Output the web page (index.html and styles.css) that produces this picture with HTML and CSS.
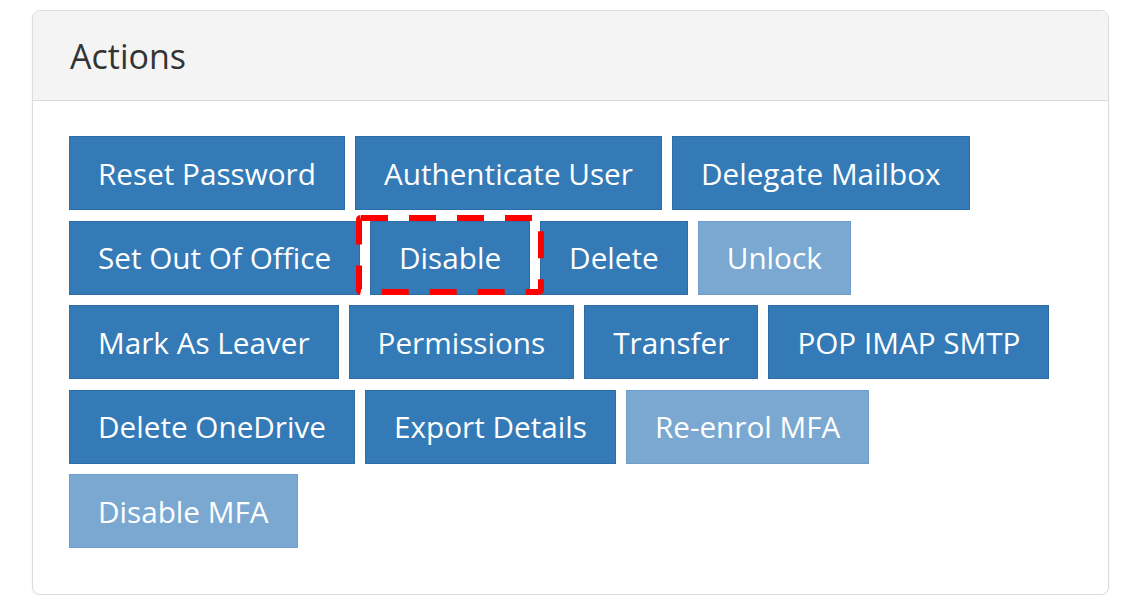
FILE: index.html
```html
<!DOCTYPE html>
<html lang="en">
<head>
    <meta charset="UTF-8">
    <title>Actions</title>
    <link rel="stylesheet" href="styles.css">
</head>
<body>
    <div class="panel">
        <div class="panel-heading">Actions</div>
        <div class="panel-body">
            <button class="btn">Reset Password</button>
            <button class="btn">Authenticate User</button>
            <button class="btn">Delegate Mailbox</button>
            <button class="btn">Set Out Of Office</button>
            <span class="marked">
                <button class="btn">Disable</button>
                <svg class="mark" width="188" height="80" viewBox="0 0 188 80">
                    <rect x="3" y="3" width="182" height="74" rx="2" fill="none" stroke="#ff0000" stroke-width="6" stroke-dasharray="27 21"/>
                </svg>
            </span>
            <button class="btn">Delete</button>
            <button class="btn" disabled>Unlock</button>
            <button class="btn">Mark As Leaver</button>
            <button class="btn">Permissions</button>
            <button class="btn">Transfer</button>
            <button class="btn">POP IMAP SMTP</button>
            <button class="btn">Delete OneDrive</button>
            <button class="btn">Export Details</button>
            <button class="btn" disabled>Re-enrol MFA</button>
            <button class="btn" disabled>Disable MFA</button>
        </div>
    </div>
</body>
</html>
```
FILE: styles.css
```css
body {
    margin: 0;
    padding: 10px 21px 0 32px;
    background: #fff;
    font-family: 'Open Sans', 'Noto Sans', sans-serif;
    color: #333;
}
.panel {
    border: 1px solid #dcdcdc;
    border-radius: 8px;
    box-shadow: 0 1px 2px rgba(0,0,0,0.06);
    overflow: hidden;
}
.panel-heading {
    height: 89px;
    line-height: 91px;
    padding: 0 37px;
    background-color: #f4f4f4;
    border-bottom: 1px solid #dadada;
    font-size: 34px;
    color: #333;
}
.panel-body {
    display: flex;
    flex-wrap: wrap;
    gap: 10.5px 10px;
    padding: 35px 36px 46px 36px;
}
.btn {
    height: 74px;
    padding: 0 28px;
    border: 1px solid #2e6da4;
    background-color: #337ab7;
    color: #fff;
    font-family: inherit;
    font-size: 29.7px;
    cursor: pointer;
}
.btn[disabled] {
    background-color: #7aa8d1;
    border-color: #6d9dca;
    cursor: not-allowed;
}
.marked {
    position: relative;
    display: inline-flex;
}
.mark {
    position: absolute;
    left: -14px;
    top: -6px;
    pointer-events: none;
}
```
